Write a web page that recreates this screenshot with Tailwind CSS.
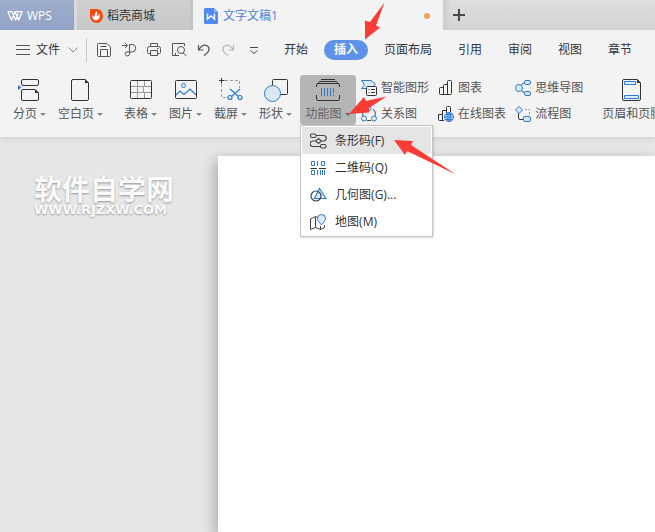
<!DOCTYPE html>
<html lang="zh-CN">
<head>
  <meta charset="UTF-8">
  <meta name="viewport" content="width=device-width, initial-scale=1.0">
  <title>文字文稿1 - WPS</title>
  <script src="https://cdn.jsdelivr.net/npm/@tailwindcss/browser@4"></script>
</head>
<body class="relative flex flex-col h-screen overflow-hidden bg-[#e7e7e7] font-['Open_Sans','Noto_Sans_CJK_SC',sans-serif] text-xs leading-4 text-[#444] whitespace-nowrap">

  <!-- Title bar -->
  <header class="flex h-[30px] shrink-0 bg-linear-to-b from-[#dedfe0] to-[#d2d3d4]">
    <button class="flex items-center w-[74px] shrink-0 gap-1 pl-[7px] pt-px bg-linear-to-b from-[#9dadcd] to-[#92a3c5] text-white">
      <svg class="w-4 h-4" viewBox="0 0 16 16" fill="none" stroke="#fff" stroke-width="1.3" stroke-linejoin="round"><path d="M.8 3.700H5L8.600 12L11.300 5.500M15.200 3.700L11.700 12L8 3.700L4.500 12L.8 3.700M8 3.700h7.200"/></svg>
      WPS
    </button>
    <button class="flex items-center w-[116px] shrink-0 gap-1 pl-3 pt-px border-l-[3px] border-[#d9dadb] bg-linear-to-b from-[#d0d1d2] to-[#c6c7c8] text-[#333]">
      <svg class="w-[14px] h-4" viewBox="0 0 14 16"><path d="M1 1h7a6 7 0 0 1 6 7a6.500 7 0 0 1-13 0z" fill="#fb4a0c"/><path d="M7.500 3c1.500 2 .8 3.500 0 5c1.500-.2 2.500-1.200 3-2.500c1 4-1 6.800-3.500 6.800S2.800 10 3.500 7c.5 1 1.200 1.500 2 1.700C5.500 6.500 6 5 7.500 3z" fill="#fff"/></svg>
      稻壳商城
    </button>
    <div class="flex items-center w-[253px] shrink-0 pl-[11px] pr-[13px] pt-px border-l-[3px] border-[#c2c3c4] bg-[#f3f3f3]">
      <svg class="w-[14px] h-4 mr-[5px]" viewBox="0 0 14 16"><path d="M1.500 0H10l4 4v10.500a1.500 1.500 0 0 1-1.500 1.500h-11A1.500 1.500 0 0 1 0 14.500v-13A1.500 1.500 0 0 1 1.500 0z" fill="#5289f0"/><path d="M10 0v4h4z" fill="#8cb2f8"/><path d="M3.500 5.500v5.500L7 8l3.500 3V5.500" fill="none" stroke="#fff" stroke-width="1.500"/></svg>
      <span class="text-[#5181d8]">文字文稿1</span>
      <span class="ml-auto w-1.5 h-1.5 rounded-full bg-[#e5a15a]"></span>
    </div>
    <button class="w-8 flex items-center justify-center bg-linear-to-r from-[#cccdce] to-transparent to-25%" aria-label="新建">
      <svg class="w-3 h-3" viewBox="0 0 12 12" stroke="#4a4a4a" stroke-width="2"><path d="M0 6h12M6 0v12"/></svg>
    </button>
  </header>

  <!-- Menu bar -->
  <nav class="flex items-center h-[38px] shrink-0 bg-[#f3f3f3] pl-4 pt-px text-[#333]">
    <button class="flex items-center">
      <svg class="w-[14px] h-3 mr-1.5" viewBox="0 0 14 12" stroke="#555"><path d="M0 1.500h14M0 5.500h14M0 10.500h14"/></svg>
      文件
      <svg class="w-[10px] h-[6px] ml-2" viewBox="0 0 10 6" fill="none" stroke="#888"><path d="M.5.5L5 5L9.500.5"/></svg>
    </button>
    <span class="w-px h-6 ml-2 mr-[9px] bg-[#c8c8c8]"></span>
    <div class="flex items-center gap-[9px]">
      <button aria-label="保存"><svg class="block w-4 h-4" viewBox="0 0 16 16" fill="none" stroke="#555"><path d="M2.500 1.500h8.500l3.500 3.500v8.500a1 1 0 0 1-1 1h-11a1 1 0 0 1-1-1v-11a1 1 0 0 1 1-1zM4.500 4.500h6M4.500 14.500V7.500h7v7"/></svg></button>
      <button aria-label="输出"><svg class="block w-4 h-4" viewBox="0 0 16 16" fill="none" stroke="#555"><path d="M1 3.500h5M4 1l2.500 2.500L4 6M8.500 2.500H11a3.500 3.500 0 0 1 0 7.500H5M8.500 2.500v9a2.200 2.200 0 1 1-3.500-1.500"/></svg></button>
      <button aria-label="打印"><svg class="block w-4 h-4" viewBox="0 0 16 16" fill="none" stroke="#555"><path d="M4.500 4.500v-3h7v3M4 11.500H2.500a1 1 0 0 1-1-1v-4a2 2 0 0 1 2-2h9a2 2 0 0 1 2 2v4a1 1 0 0 1-1 1H12M4.500 8.500h7v5h-7zM11 6.500h1.500"/></svg></button>
      <button aria-label="打印预览"><svg class="block w-4 h-4" viewBox="0 0 16 16" fill="none" stroke="#555"><path d="M8 13.500H1.500v-12h12V4M4.500 11V13"/><circle cx="10" cy="8" r="3.500"/><path d="M12 11l3.500 3"/></svg></button>
      <button aria-label="撤销"><svg class="block w-4 h-4" viewBox="0 0 16 16" fill="none" stroke="#555" stroke-width="1.200"><path d="M2.500 3v5h5M2.500 8C5.500 3 9.500 2 12 4.500c2.500 3 0 6.500-4 9"/></svg></button>
      <button aria-label="恢复"><svg class="block w-4 h-4" viewBox="0 0 16 16" fill="none" stroke="#b8b8b8" stroke-width="1.200"><path d="M12.500 3v5h-5M12.500 8C9.500 3 5.500 2 3 4.500c-2.500 3 0 6.500 4 9"/></svg></button>
      <button aria-label="自定义"><svg class="block w-4 h-4" viewBox="0 0 16 16" fill="none" stroke="#444"><path d="M4 5.500h8M4.500 8.500l3.500 3l3.500-3"/></svg></button>
    </div>
    <div class="flex items-center gap-1.5 ml-3">
      <button class="h-5 px-[10px]">开始</button>
      <button class="h-5 px-[10px] rounded-full bg-[#5e91e8] text-white font-bold">插入</button>
      <button class="h-5 px-[10px]">页面布局</button>
      <button class="h-5 px-[10px]">引用</button>
      <button class="h-5 px-[10px]">审阅</button>
      <button class="h-5 px-[10px]">视图</button>
      <button class="h-5 px-[10px]">章节</button>
    </div>
  </nav>

  <!-- Ribbon -->
  <section class="relative z-10 flex h-[70px] shrink-0 pl-[7px] pt-[7px] bg-[#f3f3f3] border-b border-[#d4d4d4] shadow-[0_2px_6px_rgba(0,0,0,0.08)] text-[#555]">
    <div class="flex items-start">
      <button class="flex flex-col items-center gap-1 h-[50px] px-1.5 pt-[3px]">
        <svg class="w-6 h-6" viewBox="0 0 24 24" fill="none" stroke="#333"><rect x="3.500" y="1.500" width="17" height="6" rx="1.500"/><path d="M5 11.500h12l3.500 3.500v6a1.500 1.500 0 0 1-1.500 1.500H5A1.500 1.500 0 0 1 3.500 21v-8A1.500 1.500 0 0 1 5 11.500z"/><path d="M17 11v4h4z" fill="#333" stroke="none"/><path d="M0 7l3.500 2.500L0 12z" fill="#2b7cd3" stroke="none"/></svg>
        <span class="flex items-center gap-[3px]">分页<i class="border-x-[3px] border-t-[3px] border-x-transparent border-t-[#888]"></i></span>
      </button>
      <button class="flex flex-col items-center gap-1 h-[50px] px-1.5 pt-[3px]">
        <svg class="w-6 h-6" viewBox="0 0 24 24" fill="none" stroke="#333"><path d="M4 1.500h12l3.500 3.500v16a1.500 1.500 0 0 1-1.500 1.500H4A1.500 1.500 0 0 1 2.500 21V3A1.500 1.500 0 0 1 4 1.500z"/><path d="M16 1v4h4z" fill="#333" stroke="none"/></svg>
        <span class="flex items-center gap-[3px]">空白页<i class="border-x-[3px] border-t-[3px] border-x-transparent border-t-[#888]"></i></span>
      </button>
    </div>
    <span class="w-px h-[62px] ml-[5px] -mt-0.5 mr-1 bg-[#dcdcdc]"></span>
    <div class="flex items-start">
      <button class="flex flex-col items-center gap-1 h-[50px] px-1.5 pt-[3px]">
        <svg class="w-6 h-6" viewBox="0 0 24 24" fill="none"><path d="M2 8.500h20M2 14.500h20M8.500 3v18M15.500 3v5.500M14.500 8.500v6M15.500 14.500V21" stroke="#999"/><rect x="1.500" y="2.500" width="21" height="18" rx="1" stroke="#333"/></svg>
        <span class="flex items-center gap-[3px]">表格<i class="border-x-[3px] border-t-[3px] border-x-transparent border-t-[#888]"></i></span>
      </button>
      <button class="flex flex-col items-center gap-1 h-[50px] px-1.5 pt-[3px]">
        <svg class="w-6 h-6" viewBox="0 0 24 24" fill="none"><rect x="1.500" y="2.500" width="21" height="18" rx="1" stroke="#333"/><circle cx="9.500" cy="7.500" r="2" stroke="#2b7cd3"/><path d="M2 17l4-4l4 3.500l6-5.500l6 6" stroke="#2b7cd3" stroke-width="1.200"/></svg>
        <span class="flex items-center gap-[3px]">图片<i class="border-x-[3px] border-t-[3px] border-x-transparent border-t-[#888]"></i></span>
      </button>
      <button class="flex flex-col items-center gap-1 h-[50px] px-1.5 pt-[3px]">
        <svg class="w-6 h-6" viewBox="0 0 24 24" fill="none"><path d="M2.500 6v13.500H8M6 2.500h14.500V10" stroke="#999" stroke-dasharray="3 2"/><path d="M0 2.500h5.500M2.500 0v5.500" stroke="#333"/><path d="M11 11l8.500 7.500M21 11l-8.500 7.500" stroke="#2b7cd3" stroke-width="1.200"/><circle cx="11" cy="19.500" r="2" stroke="#2b7cd3" stroke-width="1.200"/><circle cx="21" cy="19.500" r="2" stroke="#2b7cd3" stroke-width="1.200"/></svg>
        <span class="flex items-center gap-[3px]">截屏<i class="border-x-[3px] border-t-[3px] border-x-transparent border-t-[#888]"></i></span>
      </button>
      <button class="flex flex-col items-center gap-1 h-[50px] px-1.5 pt-[3px]">
        <svg class="w-6 h-6" viewBox="0 0 24 24" fill="none"><rect x="8.500" y="1.500" width="15" height="15" rx="1" stroke="#333"/><circle cx="8.500" cy="15.500" r="8" fill="#dce6f1" stroke="#2b7cd3"/></svg>
        <span class="flex items-center gap-[3px]">形状<i class="border-x-[3px] border-t-[3px] border-x-transparent border-t-[#888]"></i></span>
      </button>
      <div class="relative ml-0.5">
        <button class="flex flex-col items-center gap-1 w-14 h-[50px] pt-[3px] rounded bg-[#b5b5b5] text-[#666]" aria-expanded="true">
          <svg class="w-6 h-6" viewBox="0 0 24 24" fill="none"><path d="M4 1.500h14M1.500 5l1-1.500h17l1 1.500M-.5 9V7A1.500 1.500 0 0 1 1 5.500h20A1.500 1.500 0 0 1 22.500 7v2M-.5 17v4A1.500 1.500 0 0 0 1 22.500h20a1.500 1.500 0 0 0 1.500-1.500v-4" stroke="#333" transform="translate(1 0)"/><path d="M4.500 10v8M7.500 10v8M10.500 10v8M13.500 10v8M16.500 10v5M16.500 16.500V18" stroke="#2b7cd3" transform="translate(1 0)"/></svg>
          <span class="flex items-center gap-[3px]">功能图<i class="border-x-[3px] border-t-[3px] border-x-transparent border-t-[#666]"></i></span>
        </button>
        <!-- Dropdown -->
        <div class="absolute left-0 top-full w-[133px] p-px border border-[#c6c6c6] bg-white shadow-[1px_1px_2px_rgba(0,0,0,0.15)] text-[#333]">
          <button class="flex items-center gap-2 w-full h-[27px] pl-2 bg-[#e5e5e5]">
            <svg class="w-[17px] h-4" viewBox="0 0 17 16" fill="none" stroke="#444" stroke-width="1.100"><rect x=".5" y="1" width="5.500" height="3.500" rx="1.500"/><rect x="10.500" y="11.500" width="5.500" height="3.500" rx="1.500"/><path d="M6 2.500h7.500a2.700 2.700 0 0 1 0 5.500H11.500M5.500 8H3a2.700 2.700 0 0 0 0 5.500h7.500M8.500 5.500L11.500 8L8.500 10.500L5.500 8z"/></svg>
            条形码(F)
          </button>
          <button class="flex items-center gap-2 w-full h-[27px] pl-2">
            <svg class="w-[17px] h-4" viewBox="0 0 17 16" fill="none" stroke="#2b7cd3"><path d="M1.500 1.500h3v4h-3zM11.500 1.500h3v4h-3zM1.500 10.500h3v4h-3zM7.500 1v5M7.500 10v5M10.500 10v5M12.500 10v5M14.500 10v5"/><path d="M.5 8.500H7M9 8.500h7" stroke="#333"/></svg>
            二维码(Q)
          </button>
          <button class="flex items-center gap-2 w-full h-[27px] pl-2">
            <svg class="w-[17px] h-4" viewBox="0 0 17 16" fill="none" stroke-width="1.200"><path d="M9.500 1.500l6.500 10H4.500z" fill="#e0edfb" stroke="#2b7cd3"/><circle cx="6" cy="9" r="5" stroke="#444"/></svg>
            几何图(G)...
          </button>
          <button class="flex items-center gap-2 w-full h-[27px] pl-2">
            <svg class="w-[17px] h-4" viewBox="0 0 17 16" fill="none" stroke="#444"><path d="M8 3.500L5.500 2.500L.5 5v10.500l5-2l5 2l4-2V11M5.500 3v10.500M10.500 12v3.500"/><path d="M11.500 11C9 8 7.500 6.500 7.500 4.500a4 4 0 0 1 8 0c0 2-1.500 3.500-4 6.500z" fill="#dcecfb" stroke="#2b7cd3"/></svg>
            地图(M)
          </button>
        </div>
      </div>
    </div>
    <div class="flex gap-[9px] pl-[5px] pt-[5px]">
      <div class="flex flex-col gap-[10px]">
        <button class="flex items-center gap-1">
          <svg class="w-4 h-4" viewBox="0 0 16 16" fill="none"><path d="M.5.500H10L14.500 4L10.500 8.500H.5L3.500 5z" fill="#dce9f7" stroke="#2b7cd3"/><rect x="5.500" y="6.500" width="10" height="9" rx="1" fill="#f3f3f3" stroke="#333"/><path d="M7.500 9.500h1M10 9.500h4M7.500 12.500h1M10 12.500h4" stroke="#333"/></svg>
          智能图形
        </button>
        <button class="flex items-center gap-1">
          <svg class="w-4 h-4" viewBox="0 0 16 16" fill="none"><path d="M4 3a6 6 0 0 0-2 7M12 3a6 6 0 0 1 2 7M6 14.500h4" stroke="#444"/><circle cx="8" cy="2.500" r="2" stroke="#2b7cd3"/><circle cx="3" cy="12.500" r="2.500" stroke="#2b7cd3"/><circle cx="13" cy="12.500" r="2.500" stroke="#2b7cd3"/></svg>
          关系图
        </button>
      </div>
      <div class="flex flex-col gap-[10px]">
        <button class="flex items-center gap-1">
          <svg class="w-4 h-4" viewBox="0 0 16 16" fill="none" stroke="#333"><path d="M1.500 8.500a1 1 0 0 1 1-1h3v7h-3a1 1 0 0 1-1-1zM5.500 5.500a1 1 0 0 1 1-1h3v10h-4zM9.500 1.500a1 1 0 0 1 1-1h2a1 1 0 0 1 1 1v12a1 1 0 0 1-1 1h-3z"/></svg>
          图表
        </button>
        <button class="flex items-center gap-1">
          <svg class="w-4 h-4" viewBox="0 0 16 16" fill="none"><path d="M6 14.500H1.500a1 1 0 0 1-1-1v-5h4v6M4.500 8.500v-4h4V7M8.500 5V1.500a1 1 0 0 1 1-1h2a1 1 0 0 1 1 1V6" stroke="#333"/><circle cx="11" cy="11" r="4.500" fill="#d5e7f9" stroke="#2b7cd3"/><path d="M6.500 11h9M7.500 8.500h7M7.500 13.500h7M11 6.500v9" stroke="#2b7cd3"/><ellipse cx="11" cy="11" rx="2" ry="4.500" stroke="#2b7cd3"/></svg>
          在线图表
        </button>
      </div>
      <div class="flex flex-col gap-[10px]">
        <button class="flex items-center gap-1">
          <svg class="w-4 h-4" viewBox="0 0 16 16" fill="none"><path d="M6 5.500L9 2.500M6.500 10.500L9.500 13" stroke="#333"/><g fill="#dce9f7" stroke="#2b7cd3"><circle cx="4" cy="8" r="3.500"/><rect x="9.500" y=".5" width="6" height="4" rx="1.500"/><rect x="9.500" y="11.500" width="6" height="4" rx="1.500"/></g></svg>
          思维导图
        </button>
        <button class="flex items-center gap-1">
          <svg class="w-4 h-4" viewBox="0 0 16 16" fill="none"><path d="M10 3.500h4.500V10" stroke="#999" stroke-dasharray="2 1.500"/><path d="M3.500 7v5a1.500 1.500 0 0 0 1.500 1.500h3.500" stroke="#333"/><g fill="#dce9f7" stroke="#2b7cd3"><path d="M4 .5L7.500 4L4 7.500L.5 4z"/><rect x="8.500" y="10.500" width="7" height="5" rx="1.500"/></g></svg>
          流程图
        </button>
      </div>
    </div>
    <span class="w-px h-[62px] ml-[9px] -mt-0.5 mr-1 bg-[#dcdcdc]"></span>
    <button class="flex flex-col items-center gap-1 h-[50px] px-1.5 pt-[3px] shrink-0">
      <svg class="w-6 h-6" viewBox="0 0 24 24" fill="none"><path d="M4 1.500h13l3.500 3.500v16a1.500 1.500 0 0 1-1.500 1.500H4A1.500 1.500 0 0 1 2.500 21V3A1.500 1.500 0 0 1 4 1.500z" stroke="#333"/><path d="M17 1v4h4z" fill="#333"/><path d="M4.500 3.500h11v3h-11zM4.500 17.500h14v3h-14z" fill="#e0edfb" stroke="#2b7cd3"/></svg>
      页眉和页脚
    </button>
  </section>

  <!-- Document area -->
  <main class="flex flex-1 pt-[18px]">
    <div class="w-[218px] shrink-0 pl-[34px] pt-[18px] font-bold text-[#fafafa] [text-shadow:0_1px_2px_#999]">
      <p class="text-[28px] leading-[30px]">软件自学网</p>
      <p class="font-['DejaVu_Sans',sans-serif] text-[13px] leading-3">WWW.RJZXW.COM</p>
    </div>
    <div class="flex-1 bg-white shadow-[-3px_4px_14px_rgba(0,0,0,0.28)]"></div>
  </main>

  <!-- Red pointer arrows -->
  <svg class="absolute left-0 top-0 z-20 w-[655px] h-[200px] pointer-events-none" viewBox="0 0 655 200" fill="#fb3b36">
    <path d="M384.500 2.500L370 22L365 20.500V39.500L380 27.500L376 25.500z"/>
    <path d="M386.500 96.500L366 101L364 97L349 114L369 112.500V108z"/>
    <path d="M394 140L413 141L411 145L456 174.500L407 151L405 155z"/>
  </svg>
</body>
</html>
